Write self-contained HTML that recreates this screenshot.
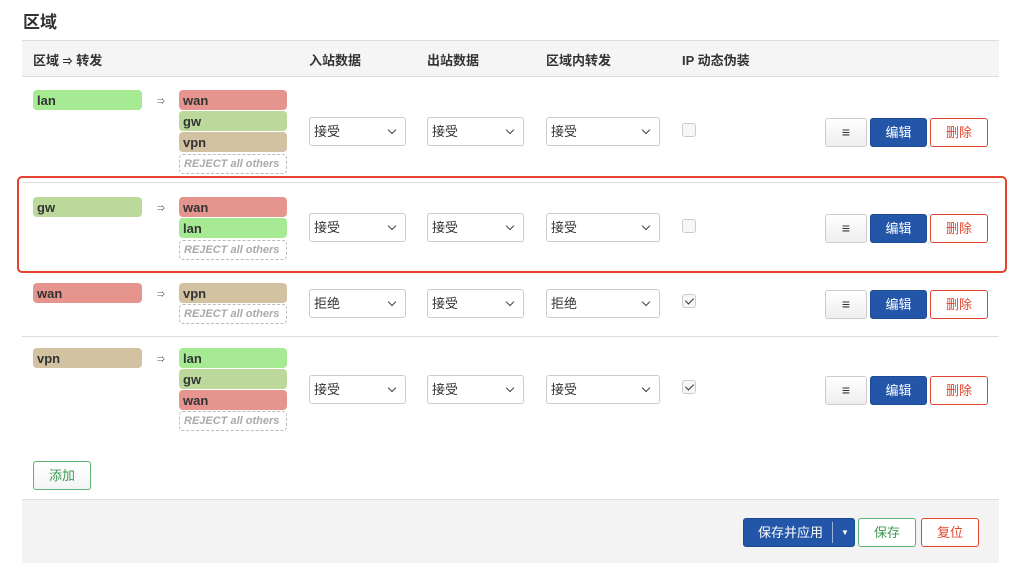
<!DOCTYPE html>
<html><head><meta charset="utf-8"><style>
*{box-sizing:border-box;margin:0;padding:0}
body{width:1024px;height:563px;background:#fff;position:relative;overflow:hidden;font-family:"Liberation Sans","Noto Sans CJK SC",sans-serif;color:#333}
.a{position:absolute}
.t{font-size:17px;font-weight:bold;left:23px;top:8px}
.hl{height:1px;background:#ddd;left:22px;width:977px}
.hd{font-size:13px;font-weight:bold;top:50px}
.b{position:absolute;height:20px;border-radius:4px;font-size:13px;font-weight:bold;line-height:21px;padding-left:4px;color:#333}
.lan{background:#a6ea94}.wan{background:#e5948e}.gw{background:#bcd89b}.vpn{background:#d2c2a2}
.rj{position:absolute;height:20px;border:1px dashed #bbb;border-radius:4px;font-size:11px;font-style:italic;font-weight:bold;color:#aaa;line-height:19px;padding-left:4px;width:108px;left:179px}
.ar{position:absolute;left:157px;font-size:8px;color:#555}
.s{position:absolute;height:29px;border:1px solid #ccc;border-radius:3px;font-size:13px;line-height:27px;padding-left:4px;background:#fff}
.s:after{content:"";position:absolute;right:10px;top:9px;width:5px;height:5px;border-right:1.3px solid #444;border-bottom:1.3px solid #444;transform:rotate(45deg)}
.cb{position:absolute;left:682px;width:14px;height:14px;border:1px solid #ccc;border-radius:3px;background:#f7f7f7}
.ck:after{content:"";position:absolute;left:4px;top:1px;width:4px;height:7px;border-right:1.5px solid #333;border-bottom:1.5px solid #333;transform:rotate(45deg)}
.btn{position:absolute;height:29px;border-radius:3px;font-size:13px;text-align:center;line-height:27px}
.m{left:825px;width:42px;border:1px solid #ccc;background:linear-gradient(#fff,#eee);font-size:14px}
.e{left:870px;width:57px;background:#2356a8;color:#fff;border:1px solid #1d4a95}
.d{left:930px;width:58px;border:1px solid #e0452f;color:#e0452f;background:#fff}
</style></head><body>
<div class="a t">区域</div>
<div class="a" style="left:22px;top:40px;width:977px;height:37px;background:#f5f5f5;border-top:1px solid #ddd;border-bottom:1px solid #ddd"></div>
<div class="a hd" style="left:33px">区域 <span style="font-size:10px">⇒</span> 转发</div>
<div class="a hd" style="left:309px">入站数据</div>
<div class="a hd" style="left:427px">出站数据</div>
<div class="a hd" style="left:546px">区域内转发</div>
<div class="a hd" style="left:682px">IP 动态伪装</div>

<div class="a hl" style="top:182px"></div>
<div class="a hl" style="top:271px"></div>
<div class="a hl" style="top:336px"></div>
<div class="a" style="left:17px;top:176px;width:990px;height:97px;border:2px solid #e5432d;border-radius:5px"></div>

<!-- row1 -->
<div class="b lan" style="left:33px;top:90px;width:109px">lan</div>
<div class="ar" style="top:96px">⇒</div>
<div class="b wan" style="left:179px;top:90px;width:108px">wan</div>
<div class="b gw" style="left:179px;top:111px;width:108px">gw</div>
<div class="b vpn" style="left:179px;top:132px;width:108px">vpn</div>
<div class="rj" style="top:154px">REJECT all others</div>
<div class="s" style="left:309px;top:117px;width:97px">接受</div>
<div class="s" style="left:427px;top:117px;width:97px">接受</div>
<div class="s" style="left:546px;top:117px;width:114px">接受</div>
<div class="cb" style="top:123px"></div>
<div class="btn m" style="top:118px">≡</div><div class="btn e" style="top:118px">编辑</div><div class="btn d" style="top:118px">删除</div>

<!-- row2 -->
<div class="b gw" style="left:33px;top:197px;width:109px">gw</div>
<div class="ar" style="top:203px">⇒</div>
<div class="b wan" style="left:179px;top:197px;width:108px">wan</div>
<div class="b lan" style="left:179px;top:218px;width:108px">lan</div>
<div class="rj" style="top:240px">REJECT all others</div>
<div class="s" style="left:309px;top:213px;width:97px">接受</div>
<div class="s" style="left:427px;top:213px;width:97px">接受</div>
<div class="s" style="left:546px;top:213px;width:114px">接受</div>
<div class="cb" style="top:219px"></div>
<div class="btn m" style="top:214px">≡</div><div class="btn e" style="top:214px">编辑</div><div class="btn d" style="top:214px">删除</div>

<!-- row3 -->
<div class="b wan" style="left:33px;top:283px;width:109px">wan</div>
<div class="ar" style="top:289px">⇒</div>
<div class="b vpn" style="left:179px;top:283px;width:108px">vpn</div>
<div class="rj" style="top:304px">REJECT all others</div>
<div class="s" style="left:309px;top:289px;width:97px">拒绝</div>
<div class="s" style="left:427px;top:289px;width:97px">接受</div>
<div class="s" style="left:546px;top:289px;width:114px">拒绝</div>
<div class="cb ck" style="top:294px"></div>
<div class="btn m" style="top:290px">≡</div><div class="btn e" style="top:290px">编辑</div><div class="btn d" style="top:290px">删除</div>

<!-- row4 -->
<div class="b vpn" style="left:33px;top:348px;width:109px">vpn</div>
<div class="ar" style="top:354px">⇒</div>
<div class="b lan" style="left:179px;top:348px;width:108px">lan</div>
<div class="b gw" style="left:179px;top:369px;width:108px">gw</div>
<div class="b wan" style="left:179px;top:390px;width:108px">wan</div>
<div class="rj" style="top:411px">REJECT all others</div>
<div class="s" style="left:309px;top:375px;width:97px">接受</div>
<div class="s" style="left:427px;top:375px;width:97px">接受</div>
<div class="s" style="left:546px;top:375px;width:114px">接受</div>
<div class="cb ck" style="top:380px"></div>
<div class="btn m" style="top:376px">≡</div><div class="btn e" style="top:376px">编辑</div><div class="btn d" style="top:376px">删除</div>

<div class="btn" style="left:33px;top:461px;width:58px;border:1px solid #5cb270;color:#3a9a52;background:linear-gradient(#fff,#f4f4f4)">添加</div>

<div class="a" style="left:22px;top:499px;width:977px;height:64px;background:#f3f3f3;border-top:1px solid #ddd"></div>
<div class="btn" style="left:743px;top:518px;width:112px;background:#2356a8;color:#fff;border:1px solid #1d4a95;text-align:left;padding-left:14px">保存并应用<span style="position:absolute;left:88px;top:3px;height:21px;border-left:1px solid #9bb3dc"></span><span style="position:absolute;left:97px;top:0;font-size:8px">▼</span></div>
<div class="btn" style="left:858px;top:518px;width:58px;border:1px solid #5cb270;color:#3a9a52;background:#fff">保存</div>
<div class="btn" style="left:921px;top:518px;width:58px;border:1px solid #e0452f;color:#e0452f;background:#fff">复位</div>
</body></html>
